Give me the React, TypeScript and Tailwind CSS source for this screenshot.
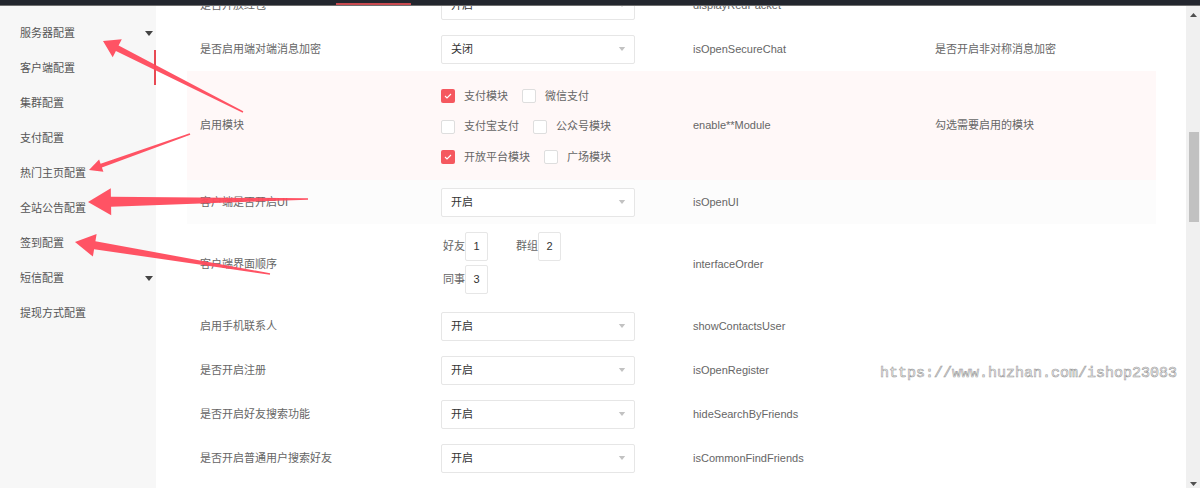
import React from "react";

type Pt = [number, number];

// Tapered callout arrow: thin tail widening toward a triangular head.
function arrowPoints(tail: Pt, tip: Pt, headLen: number, headW: number, shaftW: number, tailW = 1.5) {
  const dx = tip[0] - tail[0];
  const dy = tip[1] - tail[1];
  const len = Math.hypot(dx, dy);
  const ux = dx / len;
  const uy = dy / len;
  const nx = -uy;
  const ny = ux;
  const bx = tip[0] - ux * headLen;
  const by = tip[1] - uy * headLen;
  const pts: Pt[] = [
    [tail[0] + (nx * tailW) / 2, tail[1] + (ny * tailW) / 2],
    [bx + (nx * shaftW) / 2, by + (ny * shaftW) / 2],
    [bx + (nx * headW) / 2, by + (ny * headW) / 2],
    tip,
    [bx - (nx * headW) / 2, by - (ny * headW) / 2],
    [bx - (nx * shaftW) / 2, by - (ny * shaftW) / 2],
    [tail[0] - (nx * tailW) / 2, tail[1] - (ny * tailW) / 2],
  ];
  return pts.map((p) => `${p[0].toFixed(1)},${p[1].toFixed(1)}`).join(" ");
}

const arrows = [
  arrowPoints([243, 112], [103, 41], 16, 20, 6),
  arrowPoints([190, 134], [89, 170], 13, 13, 4),
  arrowPoints([308, 199], [88, 202], 23, 27, 10),
  arrowPoints([270, 274], [75, 242], 20, 23, 8),
];

const menu = [
  { name: "服务器配置", caret: true },
  { name: "客户端配置" },
  { name: "集群配置" },
  { name: "支付配置" },
  { name: "热门主页配置" },
  { name: "全站公告配置" },
  { name: "签到配置" },
  { name: "短信配置", caret: true },
  { name: "提现方式配置" },
];

function Caret({ className }: { className: string }) {
  return (
    <svg width="8" height="5" viewBox="0 0 8 5" className={className}>
      <path d="M0 0H8L4 5Z" fill="currentColor" />
    </svg>
  );
}

function Select({ value }: { value: string }) {
  return (
    <div className="flex h-[29px] w-[194px] items-center justify-between rounded-[2px] border border-[#e6e6e6] bg-white pl-[9px] pr-[8px] text-[11px] text-[#333]">
      <span>{value}</span>
      <Caret className="text-[#c2c2c2] w-[8px] h-[4px]" />
    </div>
  );
}

function Check({ label, on }: { label: string; on?: boolean }) {
  return (
    <div className="mr-[14px] flex items-center">
      {on ? (
        <span className="flex h-[14px] w-[14px] items-center justify-center rounded-[2px] bg-[#f5585f]">
          <svg width="8" height="6" viewBox="0 0 8 6">
            <path d="M1 3L3 5L7 1" stroke="#fff" strokeWidth="1.1" fill="none" />
          </svg>
        </span>
      ) : (
        <span className="h-[14px] w-[14px] rounded-[2px] border border-[#dedede] bg-white" />
      )}
      <span className="ml-[9px] text-[11px] text-[#666]">{label}</span>
    </div>
  );
}

function OrderBox({ label, n }: { label: string; n: number }) {
  return (
    <div className="flex items-center">
      <span className="text-[11px] text-[#666]">{label}</span>
      <span className="flex h-[29px] w-[23px] items-center justify-center rounded-[2px] border border-[#e6e6e6] bg-white text-[11px] text-[#333]">
        {n}
      </span>
    </div>
  );
}

type RowProps = {
  label: string;
  control: React.ReactNode;
  field: string;
  desc?: string;
  h?: string;
  bg?: string;
};

function Row({ label, control, field, desc, h = "h-[44px]", bg = "" }: RowProps) {
  return (
    <div className={`grid grid-cols-[254px_252px_242px_1fr] items-center ${h} ${bg}`}>
      <div className="pl-[13px] text-[11px] text-[#666]">{label}</div>
      <div>{control}</div>
      <div className="text-[11px] text-[#666]">{field}</div>
      <div className="text-[11px] text-[#666]">{desc}</div>
    </div>
  );
}

export default function App() {
  return (
    <div
      className="relative flex h-[488px] w-[1200px] flex-col overflow-hidden bg-white"
      style={{ fontFamily: '"Liberation Sans", "Noto Sans CJK SC", sans-serif' }}
    >
      {/* top navigation strip */}
      <div className="relative h-[6px] shrink-0 border-b border-[#6f6f6f] bg-[#23262e]">
        <div className="absolute bottom-0 left-[336px] h-[2px] w-[75px] bg-[#c94a50]" />
      </div>

      <div className="flex min-h-0 flex-1">
        {/* side menu */}
        <aside className="relative w-[156px] shrink-0 bg-[#f7f7f7] pt-[10px]">
          {menu.map((m) => (
            <div key={m.name} className="flex h-[35px] items-center justify-between pl-[20px] pr-[3px] text-[11px] text-[#555]">
              <span>{m.name}</span>
              {m.caret && <Caret className="text-[#444] w-[8px] h-[5px]" />}
            </div>
          ))}
          <div className="absolute right-0 top-[44px] h-[35px] w-[2px] bg-[#e84a54]" />
        </aside>

        {/* settings table */}
        <main className="min-w-0 flex-1 overflow-hidden">
          <div className="mt-[-23px] pl-[31px] pr-[30px]">
            <Row label="是否开放红包" control={<Select value="开启" />} field="displayRedPacket" />
            <Row label="是否启用端对端消息加密" control={<Select value="关闭" />} field="isOpenSecureChat" desc="是否开启非对称消息加密" />
            <Row
              label="启用模块"
              h="h-[109px]"
              bg="bg-[#fff8f8]"
              field="enable**Module"
              desc="勾选需要启用的模块"
              control={
                <div className="flex flex-col gap-[14px] pt-[2px]">
                  <div className="flex">
                    <Check label="支付模块" on />
                    <Check label="微信支付" />
                  </div>
                  <div className="flex">
                    <Check label="支付宝支付" />
                    <Check label="公众号模块" />
                  </div>
                  <div className="flex">
                    <Check label="开放平台模块" on />
                    <Check label="广场模块" />
                  </div>
                </div>
              }
            />
            <Row label="客户端是否开启UI" control={<Select value="开启" />} field="isOpenUI" bg="bg-[#fcfcfc]" />
            <Row
              label="客户端界面顺序"
              h="h-[80px]"
              field="interfaceOrder"
              control={
                <div className="flex flex-col gap-[4px] pl-[2px] pb-[3px]">
                  <div className="flex gap-[28px]">
                    <OrderBox label="好友" n={1} />
                    <OrderBox label="群组" n={2} />
                  </div>
                  <OrderBox label="同事" n={3} />
                </div>
              }
            />
            <Row label="启用手机联系人" control={<Select value="开启" />} field="showContactsUser" />
            <Row label="是否开启注册" control={<Select value="开启" />} field="isOpenRegister" />
            <Row label="是否开启好友搜索功能" control={<Select value="开启" />} field="hideSearchByFriends" />
            <Row label="是否开启普通用户搜索好友" control={<Select value="开启" />} field="isCommonFindFriends" />
            <Row label="" control={<Select value="开启" />} field="" />
          </div>
        </main>

        {/* scrollbar */}
        <div className="relative w-[14px] shrink-0 bg-[#f0f0f0]">
          <svg width="7" height="4" viewBox="0 0 7 4" className="absolute left-[4px] top-[7px]">
            <path d="M0 4L3.5 0L7 4Z" fill="#505050" />
          </svg>
          <div className="absolute left-[3px] top-[126px] h-[90px] w-[10px] bg-[#c1c1c1]" />
          <svg width="7" height="4" viewBox="0 0 7 4" className="absolute bottom-[2px] left-[4px]">
            <path d="M0 0L7 0L3.5 4Z" fill="#505050" />
          </svg>
        </div>
      </div>

      {/* watermark */}
      <div
        className="pointer-events-none absolute left-[880px] top-[364px] text-[15px] leading-[20px] text-white [-webkit-text-stroke:0.6px_#9a9a9a]"
        style={{ fontFamily: '"Liberation Mono", monospace' }}
      >
        https://www.huzhan.com/ishop23083
      </div>

      {/* callout arrows */}
      <svg className="pointer-events-none absolute left-0 top-0" width="1200" height="488">
        {arrows.map((p, i) => (
          <polygon key={i} points={p} fill="#ff4a5c" fillOpacity="0.95" />
        ))}
      </svg>
    </div>
  );
}
